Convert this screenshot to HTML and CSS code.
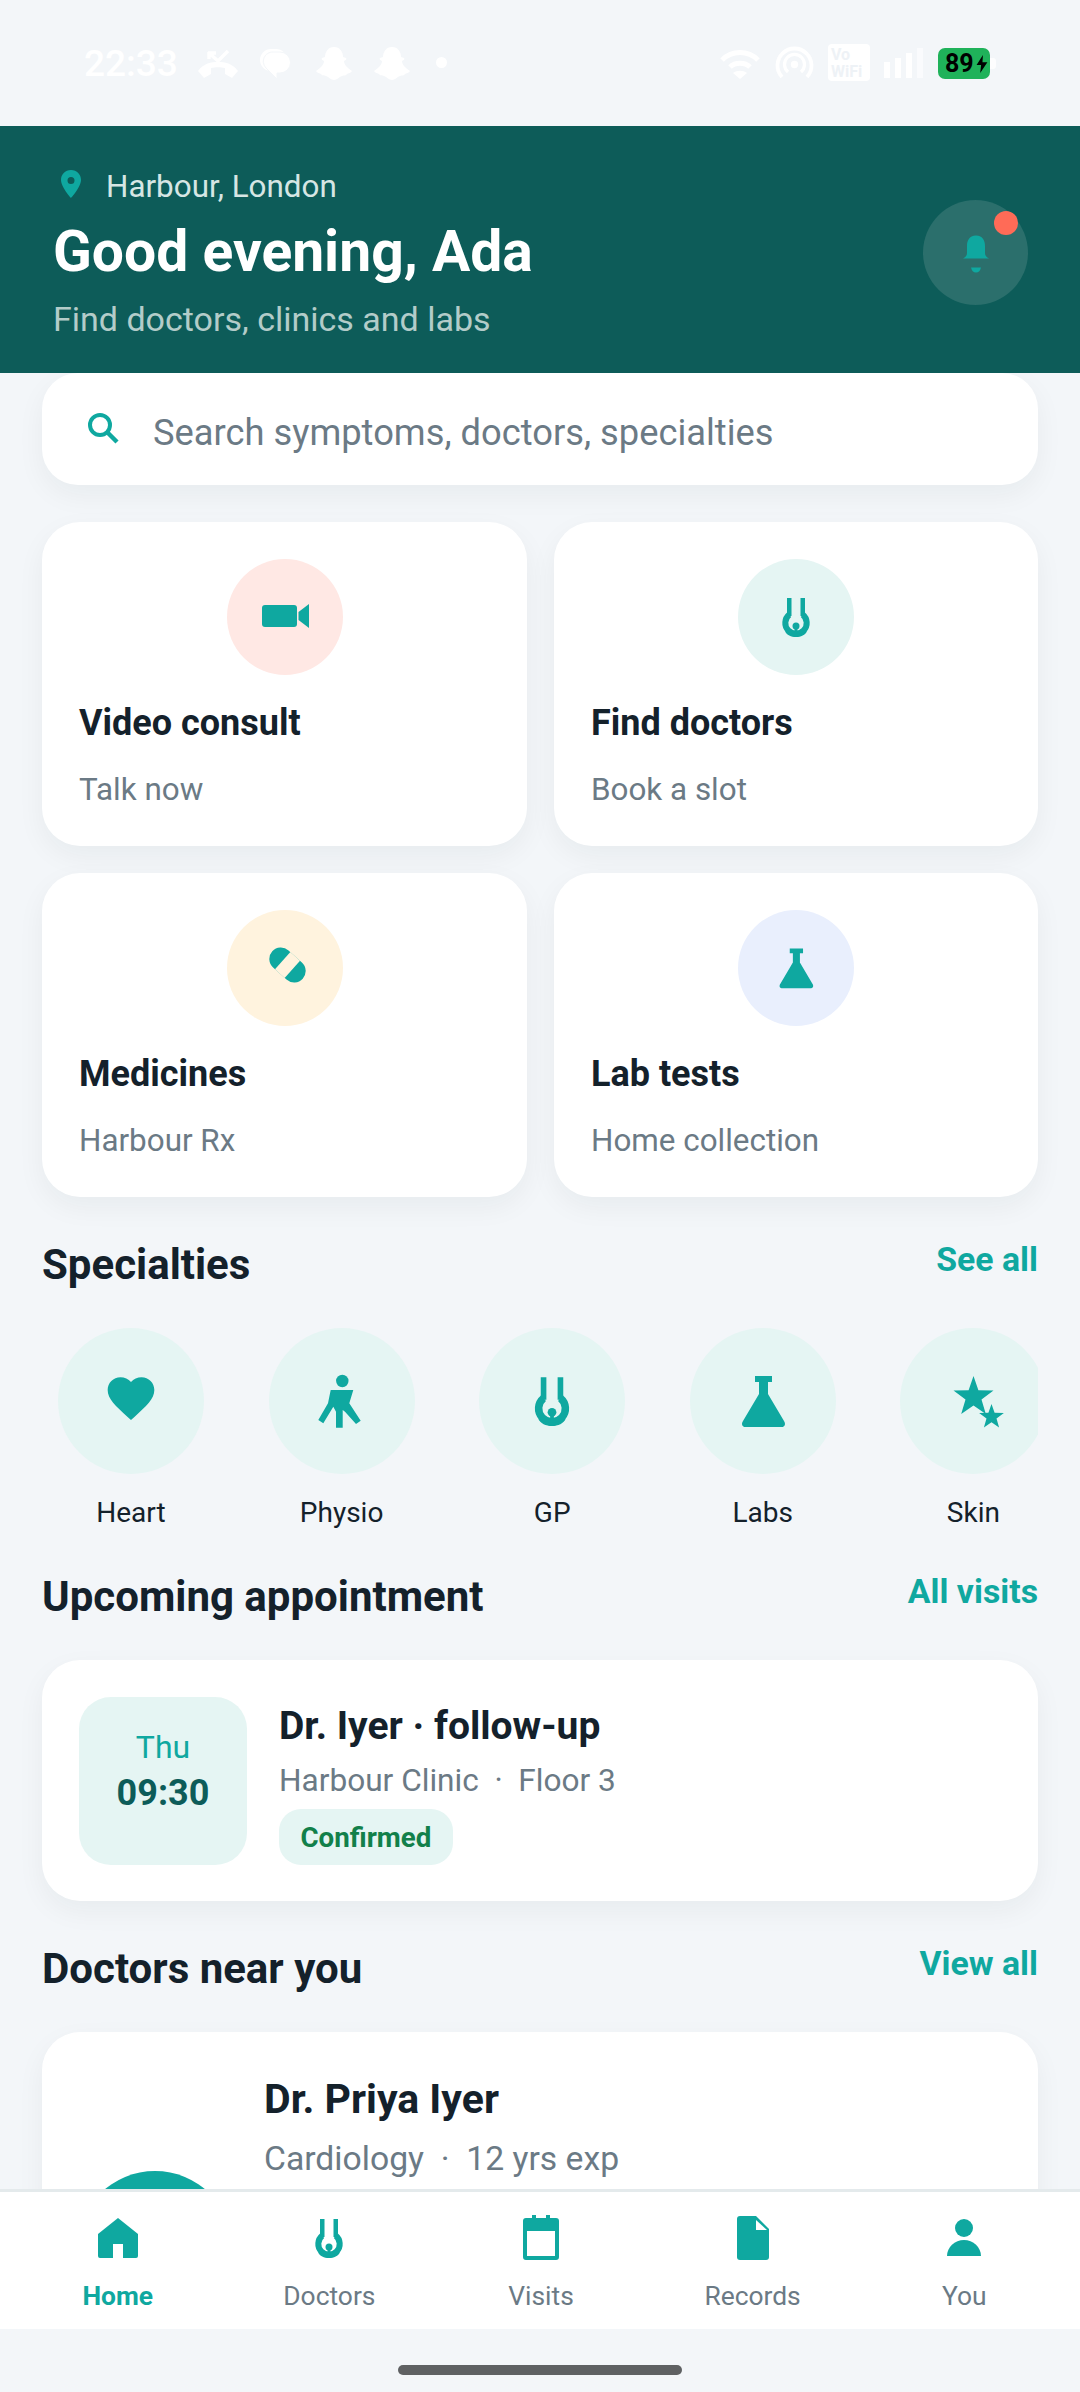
FILE: index.html
```html
<!DOCTYPE html>
<html lang="en">
<head>
<meta charset="utf-8">
<title>Harbour Health</title>
<link rel="stylesheet" href="styles.css">
</head>
<body>
<svg class="defs" aria-hidden="true">
  <symbol id="i-steth" viewBox="0 0 48 48">
    <path d="M17.250 5V23M30.750 5V23" fill="none" stroke="currentColor" stroke-width="4.500"/>
    <path d="M17.250 21.700A10.700 10.700 0 1 0 30.750 21.700" fill="none" stroke="currentColor" stroke-width="6"/>
    <path d="M13 38C18 42 30 42 35 38C32 46 16 46 13 38Z" fill="currentColor"/>
    <circle cx="24" cy="33" r="3.500" fill="currentColor"/>
    <path d="M22.500 35H25.500V40H22.500Z" fill="currentColor"/>
  </symbol>
  <symbol id="i-flask" viewBox="0 0 64 64">
    <path d="M24 7H41V13H37V25L53 52C55 55 54 58 50 58H15C11 58 10 55 12 52L28 25V13H24Z" fill="currentColor"/>
  </symbol>
  <symbol id="i-ghost" viewBox="0 0 36 33">
    <path d="M18 0C24 0 27 5 27 10L30 11C31 12 30 13 28 14C28 17 31 21 36 24C35 26 32 26 31 27C30 29 28 28 26 29C23 30 21 33 18 33C15 33 13 30 10 29C8 28 6 29 5 27C4 26 1 26 0 24C5 21 8 17 8 14C6 13 5 12 6 11L9 10C9 5 12 0 18 0Z" fill="#fff"/>
  </symbol>
</svg>

<div class="status">
  <div class="status-left">
    <span class="clock">22:33</span>
    <svg class="s-call" viewBox="0 0 40 30"><path d="M0 22C6 14 13 13 20 13C27 13 34 14 40 22L34 29L27 25V19C23 18 17 18 13 19V25L6 29Z" fill="#fff"/><path d="M11 3V10M10 4H18M11 4L20 12L30 2" fill="none" stroke="#fff" stroke-width="3.4"/></svg>
    <svg class="s-bubble" viewBox="0 0 31 30"><rect width="27" height="22" rx="11" fill="#fff"/><path d="M13 3H20A10.5 10.5 0 0 1 20 24H17V30L6 19C0 12 5 3 13 3Z" fill="#fff" stroke="#f3f6f9" stroke-width="1"/></svg>
    <svg class="s-ghost s-ghost-first"><use href="#i-ghost"/></svg>
    <svg class="s-ghost"><use href="#i-ghost"/></svg>
    <span class="s-dot"></span>
  </div>
  <div class="status-right">
    <svg class="s-wifi" viewBox="0 0 42 30"><path d="M3 11C13 1 29 1 39 11M11 18C16 13 26 13 31 18" fill="none" stroke="#fff" stroke-width="5"/><path d="M14 24C18 21 24 21 28 24L21 30Z" fill="#fff"/></svg>
    <svg class="s-spot" viewBox="0 0 39 33"><path d="M7 31A17 17 0 1 1 32 31" fill="none" stroke="#fff" stroke-width="3.800"/><path d="M13 26A10 10 0 1 1 26 26" fill="none" stroke="#fff" stroke-width="3.200"/><circle cx="19.500" cy="18.500" r="3.700" fill="#fff"/></svg>
    <span class="s-vo">Vo<br>WiFi</span>
    <span class="s-signal"><i class="b1"></i><i class="b2"></i><i class="b3"></i><i class="b4"></i></span>
    <span class="s-batt"><span class="s-cell">89<svg class="s-bolt" viewBox="0 0 12 20"><path d="M7 0L0 11H5L4 20L12 8H6.500Z" fill="#000"/></svg></span><span class="s-nub"></span></span>
  </div>
</div>

<header class="hero">
  <div class="hero-text">
    <div class="loc">
      <svg class="pin" viewBox="0 0 22 28"><path fill-rule="evenodd" d="M11 0C5 0 1 4.500 1 10C1 17 11 28 11 28S21 17 21 10C21 4.500 17 0 11 0ZM11 7A3.500 3.500 0 1 1 11 14A3.500 3.500 0 0 1 11 7Z"/></svg>
      <span class="loc-t">Harbour, London</span>
    </div>
    <h1 class="greet">Good evening, Ada</h1>
    <p class="tag">Find doctors, clinics and labs</p>
  </div>
  <div class="bell">
    <svg class="bell-i" viewBox="0 0 40 40"><path d="M20 2.500C13 2.500 11 8 11 13V20C11 23 9 24.500 7 25.500H33C31 24.500 29 23 29 20V13C29 8 27 2.500 20 2.500Z"/><path d="M15 34.500H25C24.500 37.500 22.500 39.500 20 39.500C17.500 39.500 15.500 37.500 15 34.500Z"/></svg>
    <span class="bell-dot"></span>
  </div>
</header>

<main class="content">
  <div class="search">
    <svg class="search-i" viewBox="0 0 32 32"><circle cx="13" cy="13" r="10" fill="none" stroke="currentColor" stroke-width="4"/><path d="M20 20L30 30" stroke="currentColor" stroke-width="4.400"/></svg>
    <span class="search-t">Search symptoms, doctors, specialties</span>
  </div>

  <div class="tiles">
    <div class="tile">
      <div class="tile-ic c-red"><svg class="ic48" viewBox="0 0 48 48"><rect x="1" y="12" width="35" height="22" rx="3" fill="currentColor"/><path d="M37.500 19L48 11V35L37.500 27Z" fill="currentColor"/></svg></div>
      <div class="tile-t">Video consult</div>
      <div class="tile-s">Talk now</div>
    </div>
    <div class="tile">
      <div class="tile-ic c-mint"><svg class="ic48"><use href="#i-steth"/></svg></div>
      <div class="tile-t">Find doctors</div>
      <div class="tile-s">Book a slot</div>
    </div>
    <div class="tile">
      <div class="tile-ic c-sand"><svg class="ic48" viewBox="-2.500 3 48 48"><g transform="rotate(42 24 24)"><rect x="3.500" y="12.500" width="41" height="23" rx="11.500" fill="currentColor"/><rect x="17.500" y="12.500" width="13" height="23" fill="#fff3de"/></g></svg></div>
      <div class="tile-t">Medicines</div>
      <div class="tile-s">Harbour Rx</div>
    </div>
    <div class="tile">
      <div class="tile-ic c-blue"><svg class="ic50"><use href="#i-flask"/></svg></div>
      <div class="tile-t">Lab tests</div>
      <div class="tile-s">Home collection</div>
    </div>
  </div>

  <div class="sec sec-first"><h2>Specialties</h2><a>See all</a></div>
  <div class="specs">
    <div class="spec"><div class="spec-ic"><svg class="ic56" viewBox="0 1.200 24 24"><path fill="currentColor" d="M12 21.350l-1.450-1.320C5.400 15.360 2 12.280 2 8.500 2 5.420 4.420 3 7.500 3c1.740 0 3.410.81 4.500 2.090C13.090 3.810 14.760 3 16.500 3 19.580 3 22 5.420 22 8.500c0 3.780-3.400 6.860-8.550 11.540L12 21.350z"/></svg></div><span>Heart</span></div>
    <div class="spec"><div class="spec-ic"><svg class="ic64" viewBox="0 0 64 64"><circle cx="32.300" cy="12" r="6.200" fill="currentColor"/><path fill="currentColor" d="M20.700 21H43.300L39.300 34.300L50.700 51.700L46 55L35 42.700L32.700 41V58.700H26V42.700L23.300 37.700L13.300 54.300L8.300 51L18 34.300Z"/></svg></div><span>Physio</span></div>
    <div class="spec"><div class="spec-ic"><svg class="ic60"><use href="#i-steth"/></svg></div><span>GP</span></div>
    <div class="spec"><div class="spec-ic"><svg class="ic64"><use href="#i-flask"/></svg></div><span>Labs</span></div>
    <div class="spec"><div class="spec-ic"><svg class="ic64" viewBox="0 0 64 64"><path fill="currentColor" d="M32.500 7L37.400 21.200L52.500 21.500L40.500 30.600L44.800 45L32.500 36.400L20.200 45L24.500 30.600L12.500 21.500L27.600 21.200Z"/><path fill="currentColor" d="M50.500 35L53.600 43.700L62.900 44L55.500 49.600L58.100 58.500L50.500 53.300L42.900 58.500L45.500 49.600L38.100 44L47.400 43.700Z"/></svg></div><span>Skin</span></div>
  </div>

  <div class="sec sec-appt"><h2>Upcoming appointment</h2><a>All visits</a></div>
  <div class="appt">
    <div class="date"><span class="date-d">Thu</span><span class="date-t">09:30</span></div>
    <div class="appt-b">
      <div class="appt-t">Dr. Iyer · follow-up</div>
      <div class="appt-s">Harbour Clinic&nbsp; ·&nbsp; Floor 3</div>
      <span class="badge">Confirmed</span>
    </div>
  </div>

  <div class="sec sec-doc"><h2>Doctors near you</h2><a>View all</a></div>
  <div class="doc">
    <div class="avatar"></div>
    <div class="doc-b">
      <div class="doc-n">Dr. Priya Iyer</div>
      <div class="doc-s">Cardiology&nbsp; ·&nbsp; 12 yrs exp</div>
    </div>
  </div>
</main>

<nav class="nav">
  <div class="nav-i on"><svg class="ic48" viewBox="0 0 48 48"><path fill="currentColor" d="M24 4L44 20V42A2 2 0 0 1 42 44H29V30H19V44H6A2 2 0 0 1 4 42V20Z"/></svg><span>Home</span></div>
  <div class="nav-i"><svg class="ic48"><use href="#i-steth"/></svg><span>Doctors</span></div>
  <div class="nav-i"><svg class="ic48" viewBox="0 0 48 48"><path fill="currentColor" fill-rule="evenodd" d="M15 1H19V4H29V1H33V4H39A3 3 0 0 1 42 7V43A3 3 0 0 1 39 46H9A3 3 0 0 1 6 43V7A3 3 0 0 1 9 4H15ZM10 17V42H38V17Z"/></svg><span>Visits</span></div>
  <div class="nav-i"><svg class="ic48" viewBox="0 0 48 48"><path fill="currentColor" d="M11 2H27L40 15V43A3 3 0 0 1 37 46H11A3 3 0 0 1 8 43V5A3 3 0 0 1 11 2Z"/><path fill="#fff" d="M27 6L38 16H27Z"/></svg><span>Records</span></div>
  <div class="nav-i"><svg class="ic48" viewBox="0 0 48 48"><circle cx="24" cy="14" r="9" fill="currentColor"/><path fill="currentColor" d="M7 42A17 16 0 0 1 41 42Z"/></svg><span>You</span></div>
</nav>
<div class="gesture"><span class="handle"></span></div>
</body>
</html>
```
FILE: styles.css
```css
* { box-sizing: border-box; }
html, body { margin: 0; padding: 0; }
body {
  width: 1080px;
  height: 2392px;
  display: flex;
  flex-direction: column;
  overflow: hidden;
  background: #f3f6f9;
  font-family: Roboto, "Noto Sans", sans-serif;
  color: #14212b;
}
.defs { width: 0; height: 0; position: absolute; }
h1, h2, p { margin: 0; }

/* status bar */
.status {
  flex: none;
  height: 126px;
  padding: 0 84px;
  display: flex;
  justify-content: space-between;
  align-items: flex-start;
}
.status-left { display: flex; align-items: flex-start; gap: 22px; padding-top: 46px; }
.status-right { display: flex; align-items: flex-start; gap: 14px; padding-top: 44px; }
.clock { width: 92px; font-size: 37px; line-height: 32px; font-weight: 500; color: #fff; margin-top: 2px; white-space: nowrap; }
.s-call { width: 40px; height: 30px; margin-top: 3px; }
.s-bubble { width: 31px; height: 30px; margin-top: 3px; }
.s-ghost { width: 36px; height: 33px; margin-top: 1px; }
.s-ghost-first { margin-left: 3px; }
.s-dot { width: 11px; height: 11px; border-radius: 50%; background: #fff; margin: 11px 0 0 4px; }
.s-wifi { width: 42px; height: 30px; margin-top: 5px; }
.s-spot { width: 39px; height: 33px; margin-top: 2px; }
.s-vo {
  width: 42px; height: 37px; border-radius: 4px; background: #fff; color: #eef2f6;
  font-size: 16px; font-weight: 700; line-height: 17px; padding: 2px 0 0 3px;
}
.s-signal { width: 40px; height: 30px; margin-top: 4px; display: flex; align-items: flex-end; gap: 5px; }
.s-signal i { width: 6px; background: #fff; display: block; }
.s-signal .b1 { height: 16px; }
.s-signal .b2 { height: 20px; }
.s-signal .b3 { height: 25px; }
.s-signal .b4 { height: 30px; opacity: .6; }
.s-batt { display: flex; align-items: center; margin-top: 4px; }
.s-cell {
  width: 52px; height: 31px; border-radius: 7px; background: #1fb25a; color: #000;
  font-size: 25px; font-weight: 700; line-height: 31px; padding-left: 7px;
  display: flex; align-items: center; gap: 2px;
}
.s-bolt { width: 12px; height: 18px; }
.s-nub { width: 6px; height: 11px; background: #fff; border-radius: 0 3px 3px 0; opacity: .8; }

/* header */
.hero {
  flex: none;
  height: 247px;
  background: #0d5c59;
  padding: 37px 52px 0 53px;
  display: flex;
  justify-content: space-between;
  align-items: flex-start;
}
.loc { display: flex; align-items: center; gap: 24px; padding-left: 7px; height: 46px; font-size: 31.400px; line-height: 46px; color: #d6e6e4; }
.loc-t { padding-top: 2px; }
.pin { width: 22px; height: 28px; fill: #0fa8a0; margin-top: -5px; }
.greet { font-size: 57px; line-height: 66px; font-weight: 700; color: #fff; margin-top: 10px; }
.tag { font-size: 34px; line-height: 46px; color: #b3ccc9; margin-top: 11px; }
.bell { position: relative; width: 105px; height: 105px; border-radius: 50%; background: #2b6f6c; display: flex; align-items: center; justify-content: center; margin-top: 37px; }
.bell-i { width: 40px; height: 40px; fill: #0fa8a0; }
.bell-dot { position: absolute; top: 11px; right: 10px; width: 24px; height: 24px; border-radius: 50%; background: #ff6b57; }

/* content */
.content { flex: 1; min-height: 0; overflow: hidden; padding: 0 42px; display: flex; flex-direction: column; }
.search {
  flex: none; height: 112px; background: #fff; border-radius: 36px;
  box-shadow: 0 10px 28px rgba(20, 33, 43, .05);
  display: flex; align-items: center; gap: 34px; padding-left: 45px;
  font-size: 36.300px; color: #6b7a85;
}
.search-t { padding-top: 6px; }
.search-i { width: 32px; height: 32px; color: #0fa8a0; margin-top: -3px; }
.tiles { flex: none; display: grid; grid-template-columns: 485px 484px; gap: 27px; margin-top: 37px; }
.tile { height: 324px; background: #fff; border-radius: 38px; padding: 37px 37px 0; box-shadow: 0 10px 28px rgba(20, 33, 43, .05); }
.tile-ic { width: 116px; height: 116px; border-radius: 50%; margin: 0 auto; display: flex; align-items: center; justify-content: center; color: #0fa8a0; }
.c-red { background: #ffe8e4; }
.c-mint { background: #e5f5f3; }
.c-sand { background: #fff3de; }
.c-blue { background: #e9effd; }
.ic48 { width: 48px; height: 48px; }
.ic50 { width: 50px; height: 50px; }
.ic56 { width: 56px; height: 56px; }
.ic60 { width: 60px; height: 60px; }
.ic64 { width: 64px; height: 64px; }
.tile-t { font-size: 36px; line-height: 48px; font-weight: 700; margin-top: 24px; }
.tile-s { font-size: 31.400px; line-height: 40px; color: #6b7a85; margin-top: 23px; }

/* sections */
.sec { flex: none; height: 48px; display: flex; justify-content: space-between; align-items: flex-start; margin-top: 42px; margin-bottom: 41px; }
.sec h2 { font-size: 42px; line-height: 51px; font-weight: 700; }
.sec a { font-size: 33.800px; line-height: 42px; font-weight: 700; color: #0fa8a0; }
.sec-first { margin-top: 42px; margin-bottom: 41px; }
.sec-appt { margin-top: 41px; margin-bottom: 41px; }

.specs { flex: none; display: flex; gap: 32.600px; overflow: hidden; }
.spec { flex: none; width: 178px; display: flex; flex-direction: column; align-items: center; font-size: 28px; line-height: 34px; }
.spec-ic { width: 146px; height: 146px; border-radius: 50%; background: #e5f5f3; color: #0fa8a0; display: flex; align-items: center; justify-content: center; margin-bottom: 22px; }

.appt { flex: none; height: 241px; background: #fff; border-radius: 38px; padding: 37px; display: flex; gap: 32px; box-shadow: 0 10px 28px rgba(20, 33, 43, .05); }
.date { flex: none; width: 168px; height: 168px; border-radius: 32px; background: #e5f5f3; display: flex; flex-direction: column; align-items: center; padding-top: 29px; gap: 2px; }
.date-d { font-size: 32px; line-height: 42px; color: #0fa8a0; }
.date-t { font-size: 36px; line-height: 46px; font-weight: 700; color: #0d5c59; }
.appt-b { display: flex; flex-direction: column; align-items: flex-start; margin-top: 3px; }
.appt-t { font-size: 39px; line-height: 52px; font-weight: 700; }
.appt-s { font-size: 31.600px; line-height: 44px; color: #6b7a85; margin-top: 7px; }
.badge { height: 56px; padding: 1px 21.500px 0; border-radius: 22px; background: #e5f5f3; color: #12804a; font-size: 27.700px; font-weight: 700; line-height: 56px; margin-top: 6px; }

.doc { flex: none; height: 434px; background: #fff; border-radius: 38px; padding: 0 35px; display: flex; gap: 31px; box-shadow: 0 10px 28px rgba(20, 33, 43, .05); }
.avatar { flex: none; width: 156px; height: 156px; border-radius: 50%; background: #0fa8a0; margin-top: 139px; }
.doc-b { padding-top: 39px; }
.doc-n { font-size: 41px; line-height: 56px; font-weight: 700; }
.doc-s { font-size: 33.700px; line-height: 46px; color: #6b7a85; margin-top: 9px; }

/* bottom nav */
.nav { flex: none; height: 140px; background: #fff; border-top: 3px solid #e4eaec; padding: 0 10px 0 12px; display: grid; grid-template-columns: repeat(5, 1fr); }
.nav-i { display: flex; flex-direction: column; align-items: center; padding-top: 22px; color: #0fa8a0; font-size: 26.400px; line-height: 36px; }
.nav-i span { color: #6b7a85; margin-top: 16px; }
.nav-i.on span { color: #0fa8a0; font-weight: 700; }

.gesture { flex: none; height: 63px; display: flex; justify-content: center; padding-top: 36px; }
.handle { width: 284px; height: 10px; border-radius: 5px; background: #5f6163; }
```
